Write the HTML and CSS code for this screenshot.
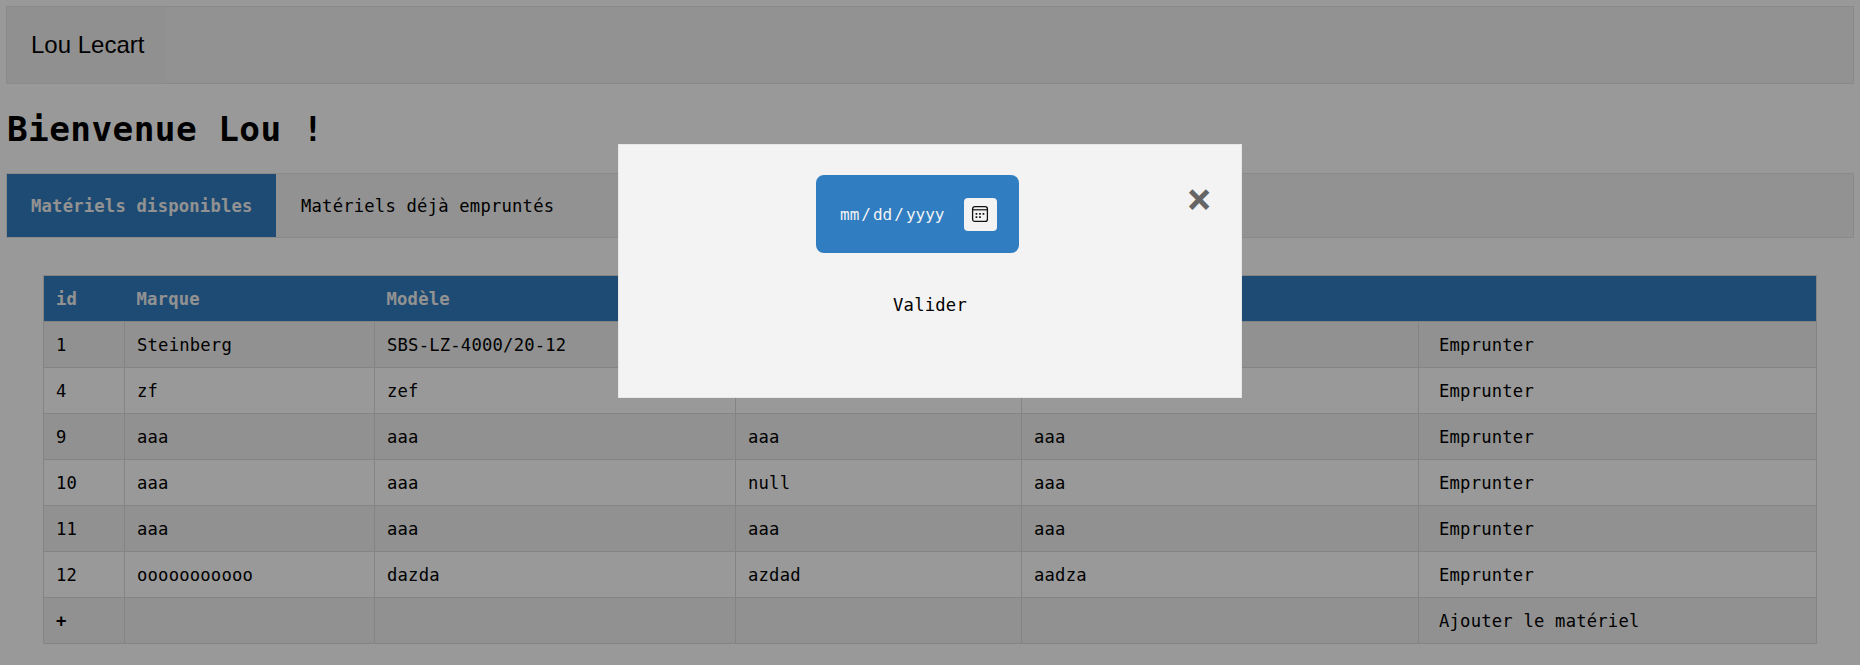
FILE: index.html
```html
<!DOCTYPE html>
<html lang="fr">
<head>
<meta charset="utf-8">
<title>Matériels</title>
<link rel="stylesheet" href="styles.css">
</head>
<body>
<nav class="topbar"><a class="user">Lou Lecart</a></nav>
<h1 class="welcome">Bienvenue Lou !</h1>
<nav class="tabs"><a class="tab active">Matériels disponibles</a><a class="tab">Matériels déjà empruntés</a></nav>
<table class="items">
<colgroup><col class="c-id"><col class="c-brand"><col class="c-model"><col class="c-ref"><col class="c-desc"><col class="c-act"></colgroup>
<tr><th>id</th><th>Marque</th><th>Modèle</th><th></th><th></th><th></th></tr>
<tr><td>1</td><td>Steinberg</td><td>SBS-LZ-4000/20-12</td><td></td><td></td><td class="act">Emprunter</td></tr>
<tr><td>4</td><td>zf</td><td>zef</td><td></td><td></td><td class="act">Emprunter</td></tr>
<tr><td>9</td><td>aaa</td><td>aaa</td><td>aaa</td><td>aaa</td><td class="act">Emprunter</td></tr>
<tr><td>10</td><td>aaa</td><td>aaa</td><td>null</td><td>aaa</td><td class="act">Emprunter</td></tr>
<tr><td>11</td><td>aaa</td><td>aaa</td><td>aaa</td><td>aaa</td><td class="act">Emprunter</td></tr>
<tr><td>12</td><td>ooooooooooo</td><td>dazda</td><td>azdad</td><td>aadza</td><td class="act">Emprunter</td></tr>
<tr><td><b>+</b></td><td></td><td></td><td></td><td></td><td class="act">Ajouter le matériel</td></tr>
</table>
<div class="overlay">
<div class="modal">
<span class="close">×</span>
<div class="date"><span class="fields"><span>mm</span><i>/</i><span>dd</span><i>/</i><span>yyyy</span></span>
<span class="picker"><svg width="18" height="18" viewBox="0 0 18 18"><rect x="1.6" y="1.6" width="14.8" height="14.8" rx="2.2" fill="none" stroke="#111" stroke-width="1.3"/><path d="M2 4.8H16" stroke="#111" stroke-width="1.2"/><path d="M4.6 8.9h1.7M8.1 8.9h1.7M11.6 8.9h1.7M4.6 12.2h1.7M8.1 12.2h1.7" stroke="#111" stroke-width="1.7"/></svg></span></div>
<div class="submit">Valider</div>
</div>
</div>
</body>
</html>
```
FILE: styles.css
```css
* { box-sizing: border-box; }
body { margin: 6px; background: #fff; color: #000; font: 17.2px/26px "DejaVu Sans Mono", monospace; letter-spacing: .205px; overflow: hidden; }
.topbar { height: 78px; border: 1px solid #e7e7e7; background: #f3f3f3; display: flex; }
.user { padding: 0 23px 0 24px; background: #f1f1f1; font: 24px/75px "Liberation Sans", Arial, sans-serif; letter-spacing: 0; }
.welcome { margin: 23px 0 22px; padding-left: 1px; font-size: 34.4px; line-height: 44px; letter-spacing: .41px; }
.tabs { height: 65px; border: 1px solid #e7e7e7; background: #f3f3f3; display: flex; }
.tab { padding: 0 24px; line-height: 65px; }
.tab.active { margin-right: 1px; background: #317dc1; color: #f3f3f3; font-weight: bold; width: 269px; white-space: nowrap; }
.items { margin: 37px 0 0 37px; width: 1774px; table-layout: fixed; border-collapse: collapse; border: 1px solid #ddd; }
.items th, .items td { height: 46px; padding: 0 12px; border: 1px solid #ddd; text-align: left; }
.items th { background: #317dc1; color: #f3f3f3; border-left: 0; border-right: 0; }
.items tr:nth-child(even) { background: #f2f2f2; }
.items .act { padding-left: 20px; }
.c-id { width: 81px; }
.c-brand { width: 250px; }
.c-model { width: 361px; }
.c-ref { width: 286px; }
.c-desc { width: 397px; }
.overlay { position: fixed; inset: 0; padding-top: 144px; background: rgba(0, 0, 0, .4); }
.modal { position: relative; width: 624px; height: 254px; margin: 0 auto; padding: 30px 0 0; border: 1px solid #e7e7e7; background: #f3f3f3; }
.close { position: absolute; right: 29px; top: 32px; color: #666; font: bold 42px/44px "DejaVu Sans Mono", monospace; }
.date { display: flex; align-items: center; justify-content: space-between; width: 203px; height: 78px; margin-left: 197px; padding: 0 22px 0 23px; border-radius: 8px; background: #317dc1; color: #f3f3f3; font-size: 16px; letter-spacing: 0; }
.fields { display: flex; padding-top: 2px; }
.fields span { padding: 0 1px; }
.fields i { font-style: normal; width: 11.7px; text-align: center; }
.picker { display: flex; align-items: center; justify-content: center; width: 33px; height: 33px; padding-right: 2px; border-radius: 4px; background: #f3f3f3; }
.picker svg { display: block; }
.submit { margin-top: 39px; text-align: center; }
```
